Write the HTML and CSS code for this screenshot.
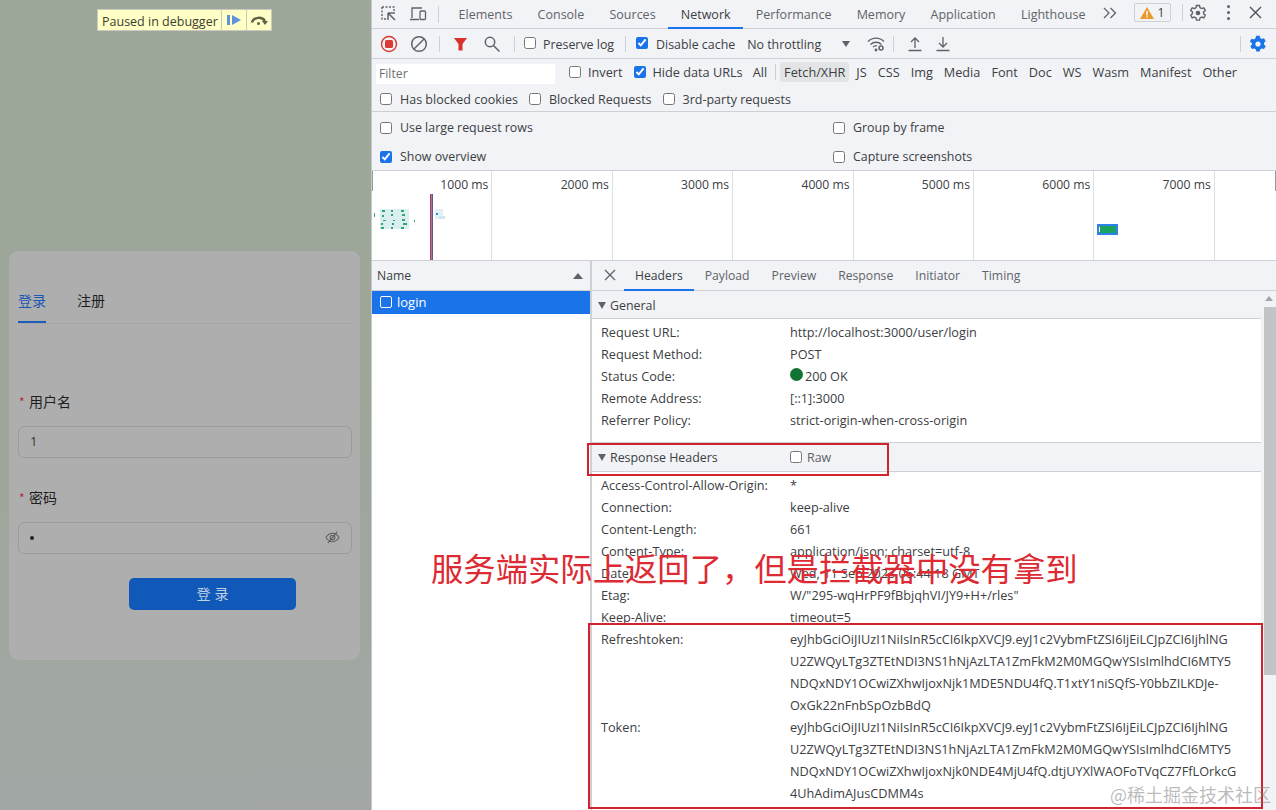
FILE: index.html
```html
<!DOCTYPE html>
<html lang="zh">
<head>
<meta charset="utf-8">
<title>Paused in debugger</title>
<link rel="stylesheet" href="styles.css">
</head>
<body>
<div class="app">
  <section class="page">
    <div class="paused">
      <span class="paused-text">Paused in debugger</span>
      <span class="paused-btn"><svg width="16" height="12" viewBox="0 0 16 12"><rect x="1" y="1" width="3" height="10" fill="#5f94dc"/><path d="M6 1l9 5-9 5z" fill="#5f94dc"/></svg></span>
      <span class="paused-btn"><svg width="19" height="13" viewBox="0 0 19 13"><path d="M2 8.500a7 6 0 0 1 13 -1.500" fill="none" stroke="#5d6148" stroke-width="2.400"/><path d="M12 7h6l-3 4z" fill="#5d6148"/><circle cx="8.500" cy="9.500" r="1.500" fill="#5d6148"/></svg></span>
    </div>
    <div class="card">
      <div class="card-tabs">
        <span class="card-tab active">登录</span>
        <span class="card-tab">注册</span>
      </div>
      <div class="field first">
        <label class="field-label"><span class="req">*</span>用户名</label>
        <div class="input">1</div>
      </div>
      <div class="field">
        <label class="field-label"><span class="req">*</span>密码</label>
        <div class="input pw"><span class="dot"></span>
          <svg width="15" height="15" viewBox="0 0 16 16" fill="none" stroke="#5e5e5e" stroke-width="1.100"><path d="M1 8c2-3 4.300-4.500 7-4.500S13 5 15 8c-2 3-4.300 4.500-7 4.500S3 11 1 8z"/><circle cx="8" cy="8" r="2.500"/><path d="M13 2L3 14"/></svg>
        </div>
      </div>
      <div class="submit">登 录</div>
    </div>
  </section>

  <section class="devtools">
    <div class="bar tabs-bar">
      <span class="ico first-ico"><svg width="18" height="18" viewBox="0 0 18 18" fill="none" stroke="#5f6368" stroke-width="1.400"><path d="M2 2h12v4M2 2v12h4" stroke-dasharray="2 1.500"/><path d="M8 8h7M8 8v7M8 8l7 7" stroke-width="1.500"/></svg></span>
      <span class="ico"><svg width="18" height="18" viewBox="0 0 18 18" fill="none" stroke="#5f6368" stroke-width="1.300"><path d="M3 13V3h10M1 14.500h9"/><rect x="11" y="6" width="5.500" height="8.500" rx="1"/></svg></span>
      <span class="sep tall"></span>
      <nav class="main-tabs">
        <span class="tab">Elements</span>
        <span class="tab">Console</span>
        <span class="tab">Sources</span>
        <span class="tab on">Network</span>
        <span class="tab">Performance</span>
        <span class="tab">Memory</span>
        <span class="tab">Application</span>
        <span class="tab">Lighthouse</span>
      </nav>
      <span class="more"><svg width="14" height="12" viewBox="0 0 14 12" fill="none" stroke="#5f6368" stroke-width="1.300"><path d="M1 1l5 5-5 5M7.500 1l5 5-5 5"/></svg></span>
      <span class="warn"><svg width="14" height="12" viewBox="0 0 14 12"><path d="M7 0l7 12H0z" fill="#ea9a2c"/><rect x="6.300" y="4" width="1.400" height="4.500" fill="#fff"/><rect x="6.300" y="9.300" width="1.400" height="1.400" fill="#fff"/></svg>1</span>
      <span class="sep tall warn-sep"></span>
      <span class="ico gear"><svg width="18" height="18" viewBox="0 0 18 18" fill="none" stroke="#5f6368" stroke-width="1.400"><path d="M7.500 1.500h3l.5 2.200 1.700.9 2.100-.8 1.500 2.600-1.700 1.500v1.800l1.700 1.500-1.500 2.600-2.100-.8-1.700.9-.5 2.200h-3l-.5-2.200-1.700-.9-2.100.8-1.500-2.600 1.700-1.500V7.900L1.700 6.400l1.500-2.600 2.100.8L7 3.700z"/><circle cx="9" cy="9" r="2.300" fill="#5f6368" stroke="none"/></svg></span>
      <span class="kebab"><i></i><i></i><i></i></span>
      <span class="ico close"><svg width="13" height="13" viewBox="0 0 13 13" stroke="#4d5156" stroke-width="1.400"><path d="M1 1l11 11M12 1L1 12"/></svg></span>
    </div>

    <div class="bar tools-bar">
      <span class="ico rec"><svg width="18" height="18" viewBox="0 0 18 18"><circle cx="9" cy="9" r="7.500" fill="none" stroke="#d93a34" stroke-width="1.400"/><rect x="5" y="5" width="8" height="8" rx="1.500" fill="#d93a34"/></svg></span>
      <span class="ico clear"><svg width="18" height="18" viewBox="0 0 18 18" fill="none" stroke="#5f6368" stroke-width="1.500"><circle cx="9" cy="9" r="7.300"/><path d="M4 14L14 4"/></svg></span>
      <span class="sep"></span>
      <span class="ico funnel"><svg width="16" height="16" viewBox="0 0 16 16"><path d="M1 2h13L9.500 8v6.500h-4V8z" fill="#d9322d"/></svg></span>
      <span class="ico search"><svg width="18" height="18" viewBox="0 0 18 18" fill="none" stroke="#5f6368" stroke-width="1.500"><circle cx="7" cy="7" r="4.700"/><path d="M10.500 10.500l6 6"/></svg></span>
      <span class="sep"></span>
      <label class="check preserve"><input type="checkbox">Preserve log</label>
      <span class="sep"></span>
      <label class="check disable"><input type="checkbox" checked>Disable cache</label>
      <span class="throttle">No throttling</span>
      <span class="caret"></span>
      <span class="ico wifi"><svg width="18" height="16" viewBox="0 0 18 16" fill="none" stroke="#5f6368" stroke-width="1.300"><path d="M1 5.500c4.500-4.500 11.500-4.500 16 0M3.500 8.500c3-3 8-3 11 0M6 11c1.500-1.200 3-1.500 4-1.300"/><circle cx="14" cy="12" r="2" stroke-width="1.500"/><circle cx="9" cy="14" r=".8" fill="#5f6368"/></svg></span>
      <span class="sep"></span>
      <span class="ico up"><svg width="16" height="16" viewBox="0 0 16 16" fill="none" stroke="#5f6368" stroke-width="1.300"><path d="M8 12V2M4 6l4-4 4 4M1.500 14.500h13"/></svg></span>
      <span class="ico down"><svg width="16" height="16" viewBox="0 0 16 16" fill="none" stroke="#5f6368" stroke-width="1.300"><path d="M8 1v10M4 7l4 4 4-4M1.500 14.500h13"/></svg></span>
      <span class="spacer"></span>
      <span class="sep"></span>
      <span class="ico blue-gear"><svg width="18" height="18" viewBox="0 0 18 18"><path d="M7.300 .8h3.400l.5 2.300 1.500.9 2.300-.7 1.700 2.900-1.700 1.600v1.800l1.700 1.600-1.700 2.900-2.300-.7-1.500.9-.5 2.300H7.300l-.5-2.300-1.500-.9-2.300.7-1.700-2.900 1.700-1.600V8.200L.8 6.600l1.700-2.900 2.300.7 1.500-.9z" fill="#1a73e8"/><circle cx="9" cy="9" r="2.600" fill="#f1f3f6"/></svg></span>
    </div>

    <div class="filters">
      <div class="filter-row">
        <span class="filter-input">Filter</span>
        <label class="check invert"><input type="checkbox">Invert</label>
        <label class="check hide"><input type="checkbox" checked>Hide data URLs</label>
        <span class="type">All</span>
        <span class="sep types-sep"></span>
        <span class="type sel">Fetch/XHR</span>
        <span class="type">JS</span>
        <span class="type">CSS</span>
        <span class="type">Img</span>
        <span class="type">Media</span>
        <span class="type">Font</span>
        <span class="type">Doc</span>
        <span class="type">WS</span>
        <span class="type">Wasm</span>
        <span class="type">Manifest</span>
        <span class="type">Other</span>
      </div>
      <div class="filter-row second">
        <label class="check"><input type="checkbox">Has blocked cookies</label>
        <label class="check"><input type="checkbox">Blocked Requests</label>
        <label class="check"><input type="checkbox">3rd-party requests</label>
      </div>
    </div>

    <div class="settings">
      <label class="check"><input type="checkbox">Use large request rows</label>
      <label class="check"><input type="checkbox">Group by frame</label>
      <label class="check"><input type="checkbox" checked>Show overview</label>
      <label class="check"><input type="checkbox">Capture screenshots</label>
    </div>

    <div class="overview">
      <div class="ov-cell">1000 ms</div>
      <div class="ov-cell">2000 ms</div>
      <div class="ov-cell">3000 ms</div>
      <div class="ov-cell">4000 ms</div>
      <div class="ov-cell">5000 ms</div>
      <div class="ov-cell">6000 ms</div>
      <div class="ov-cell">7000 ms</div>
      <svg class="ov-graph" width="904" height="90" viewBox="0 0 904 90">
        <rect x="0" y="0" width="1" height="20" fill="#9a9a9a"/>
        <rect x="903" y="0" width="1" height="20" fill="#9a9a9a"/>
        <rect x="8" y="38" width="29" height="20" fill="#dbeef0"/>
        <g fill="#2ca876">
          <rect x="10" y="39" width="3" height="2"/><rect x="19" y="39" width="2" height="2"/><rect x="29" y="39" width="3" height="2"/>
          <rect x="10" y="44" width="2" height="2"/><rect x="19" y="43" width="2" height="2"/><rect x="30" y="43" width="3" height="2"/>
          <rect x="11" y="49" width="3" height="1"/><rect x="21" y="49" width="2" height="1"/><rect x="30" y="48" width="3" height="2"/>
          <rect x="9" y="56" width="3" height="2"/><rect x="19" y="56" width="2" height="2"/><rect x="29" y="56" width="3" height="2"/>
          <rect x="9" y="52" width="2" height="2"/><rect x="20" y="52" width="2" height="2"/><rect x="31" y="52" width="4" height="2"/>
          <rect x="2" y="42" width="1" height="4"/><rect x="42" y="49" width="1" height="2"/>
        </g>
        <rect x="58" y="23" width="1.500" height="66" fill="#a34060"/>
        <rect x="59.500" y="23" width="1.500" height="66" fill="#70508c"/>
        <rect x="63" y="38" width="8" height="10" fill="#e2f1f6"/>
        <rect x="64" y="42" width="2" height="2" fill="#2196d3"/>
        <rect x="67" y="45" width="6" height="3" fill="#cfe8f2"/>
        <rect x="725" y="53" width="21" height="11" fill="#1a73e8" opacity=".9"/>
        <rect x="727" y="55" width="17" height="7" fill="#1aa260"/>
        <rect x="727" y="56" width="1" height="5" fill="#fff"/>
      </svg>
    </div>

    <div class="lower">
      <div class="names">
        <div class="names-head">Name<span class="up-caret"></span></div>
        <div class="names-row"><span class="doc"></span>login</div>
      </div>
      <div class="details">
        <div class="detail-tabs">
          <span class="dt-close"><svg width="12" height="12" viewBox="0 0 12 12" stroke="#5f6368" stroke-width="1.300"><path d="M1 1l10 10M11 1L1 11"/></svg></span>
          <span class="dt on">Headers</span>
          <span class="dt">Payload</span>
          <span class="dt">Preview</span>
          <span class="dt">Response</span>
          <span class="dt">Initiator</span>
          <span class="dt">Timing</span>
        </div>
        <div class="detail-body">
          <div class="scroll">
            <div class="sec-head"><span class="tri"></span>General</div>
            <div class="kv-list general">
              <div class="kv"><span>Request URL:</span><span>http://localhost:3000/user/login</span></div>
              <div class="kv"><span>Request Method:</span><span>POST</span></div>
              <div class="kv"><span>Status Code:</span><span><i class="status"></i>200 OK</span></div>
              <div class="kv"><span>Remote Address:</span><span>[::1]:3000</span></div>
              <div class="kv"><span>Referrer Policy:</span><span>strict-origin-when-cross-origin</span></div>
            </div>
            <div class="sec-head second"><span class="tri"></span><span class="sec-name">Response Headers</span><label class="check raw"><input type="checkbox">Raw</label></div>
            <div class="kv-list">
              <div class="kv"><span>Access-Control-Allow-Origin:</span><span>*</span></div>
              <div class="kv"><span>Connection:</span><span>keep-alive</span></div>
              <div class="kv"><span>Content-Length:</span><span>661</span></div>
              <div class="kv"><span>Content-Type:</span><span>application/json; charset=utf-8</span></div>
              <div class="kv"><span>Date:</span><span>Wed, 11 Sep 2023 06:44:18 GMT</span></div>
              <div class="kv"><span>Etag:</span><span>W/"295-wqHrPF9fBbjqhVI/JY9+H+/rles"</span></div>
              <div class="kv"><span>Keep-Alive:</span><span>timeout=5</span></div>
              <div class="kv"><span>Refreshtoken:</span><span>eyJhbGciOiJIUzI1NiIsInR5cCI6IkpXVCJ9.eyJ1c2VybmFtZSI6IjEiLCJpZCI6IjhlNG<br>U2ZWQyLTg3ZTEtNDI3NS1hNjAzLTA1ZmFkM2M0MGQwYSIsImlhdCI6MTY5<br>NDQxNDY1OCwiZXhwIjoxNjk1MDE5NDU4fQ.T1xtY1niSQfS-Y0bbZILKDJe-<br>OxGk22nFnbSpOzbBdQ</span></div>
              <div class="kv"><span>Token:</span><span>eyJhbGciOiJIUzI1NiIsInR5cCI6IkpXVCJ9.eyJ1c2VybmFtZSI6IjEiLCJpZCI6IjhlNG<br>U2ZWQyLTg3ZTEtNDI3NS1hNjAzLTA1ZmFkM2M0MGQwYSIsImlhdCI6MTY5<br>NDQxNDY1OCwiZXhwIjoxNjk0NDE4MjU4fQ.dtjUYXlWAOFoTVqCZ7FfLOrkcG<br>4UhAdimAJusCDMM4s</span></div>
            </div>
          </div>
          <div class="scrollbar"><span class="sb-up"></span><span class="sb-thumb"></span></div>
        </div>
      </div>
    </div>
  </section>
</div>
<div class="mark box-one"></div>
<div class="mark box-two"></div>
<div class="note">服务端实际上返回了，但是拦截器中没有拿到</div>
<div class="watermark">@稀土掘金技术社区</div>
</body>
</html>
```

FILE: styles.css
```css
* { box-sizing: border-box; }
html, body { margin: 0; padding: 0; height: 810px; overflow: hidden; }
body { font-family: "Open Sans", "Noto Sans CJK SC", sans-serif; font-size: 12.200px; color: #3c4043; background: #fff; position: relative; }
.app { display: flex; width: 1276px; height: 810px; }

/* page under the debugger overlay */
.page { width: 372px; flex: none; padding: 251px 11px 0 9px; background: linear-gradient(#9da898, #9ea79a 50%, #a2a7a5); border-right: 1px solid #c4c7cb; position: relative; }
.paused { position: absolute; left: 97px; top: 9px; height: 22px; display: flex; background: #ffffc6; border: 1px solid #c9cbc0; color: #3c3e30; font-size: 12.500px; }
.paused-text { padding: 0 4px; line-height: 23px; width: 123px; white-space: nowrap; }
.paused-btn { width: 25px; border-left: 1px solid #c9cbc0; display: flex; align-items: center; justify-content: center; }
.card { height: 409px; background: #aeaeae; border-radius: 9px; padding: 0 9px; font-family: "Noto Sans CJK SC", sans-serif; font-size: 14px; color: #1e1e1e; }
.card-tabs { height: 73px; display: flex; gap: 31px; border-bottom: 1px solid #a5a5a5; padding-top: 38px; }
.card-tab { height: 34px; line-height: 22px; border-bottom: 2px solid transparent; }
.card-tab.active { color: #1c56b4; border-bottom-color: #1c5cbb; }
.field-label { display: block; height: 22px; line-height: 20px; }
.req { color: #b52a48; display: inline-block; width: 11px; font-size: 12px; margin-left: 1px; margin-right: -1px; }
.field { margin-top: 29px; }
.field.first { margin-top: 67px; }
.input { height: 32px; margin-top: 13px; width: 334px; border: 1px solid #9b9b9b; border-radius: 6px; background: #aeaeae; padding: 0 11px 2px; line-height: 28px; font-family: "Open Sans", sans-serif; font-size: 13px; color: #333; display: flex; align-items: center; justify-content: space-between; }
.input.pw { padding-bottom: 1px; }
.dot { width: 4px; height: 4px; border-radius: 50%; background: #222; }
.submit { width: 167px; height: 32px; margin: 24px 0 0 111px; background: #1059b9; border-radius: 5px; color: #c2d0e6; text-align: center; line-height: 31px; font-size: 14px; word-spacing: 1px; }

/* devtools */
.devtools { flex: 1; min-width: 0; background: #f1f3f6; display: flex; flex-direction: column; }
.bar { display: flex; align-items: center; border-bottom: 1px solid #cdd0d4; }
.tabs-bar { height: 29px; padding-left: 8px; }
.tools-bar { height: 30px; padding-left: 8px; font-size: 12.400px; }
.ico { display: inline-flex; align-items: center; justify-content: center; flex: none; }
.first-ico { width: 18px; margin-right: 11px; }
.sep { width: 1px; height: 16px; background: #cdd0d4; flex: none; }
.sep.tall { height: 17px; margin-left: 11px; }
.main-tabs { display: flex; align-self: stretch; margin-left: 7px; font-size: 12.500px; }
.tab { padding: 0 12.600px; line-height: 30px; height: 29px; color: #5f6368; margin-bottom: -1px; white-space: nowrap; }
.tab.on { color: #3c4043; border-bottom: 2px solid #1a73e8; }
.more { margin-left: 4.600px; display: inline-flex; margin-top: -2px; }
.warn { margin-left: 17px; width: 37px; height: 19px; border: 1px solid #cdd0d4; border-radius: 2px; display: inline-flex; align-items: center; justify-content: center; gap: 4px; margin-top: -3px; }
.warn-sep { margin-left: 7px; margin-top: -3px; }
.gear { margin-left: 6px; margin-top: -3px; }
.kebab { margin-left: 20px; width: 4px; display: flex; flex-direction: column; gap: 3px; margin-top: -3px; }
.kebab i { width: 3px; height: 3px; border-radius: 50%; background: #5f6368; }
.close { margin-left: 18px; margin-top: -3px; }

.clear { margin-left: 12px; }
.rec + .clear + .sep { margin-left: 11px; }
.funnel { margin-left: 13px; }
.search { margin-left: 14px; }
.search + .sep { margin-left: 13px; }
.check { display: inline-flex; align-items: center; white-space: nowrap; }
.check input { width: 12px; height: 12px; margin: 0 8px 0 0; accent-color: #1a73e8; flex: none; }
.preserve { margin-left: 9px; padding-top: 1px; }
.preserve input { margin: -2px 7px 0 0; }
.disable input { margin-top: -2px; }
.preserve + .sep { margin-left: 11px; }
.disable { margin-left: 10px; padding-top: 1px; }
.throttle { margin-left: 12px; white-space: nowrap; padding-top: 1px; }
.caret { width: 0; height: 0; border-left: 4.500px solid transparent; border-right: 4.500px solid transparent; border-top: 6px solid #5f6368; margin-left: 21px; }
.wifi { margin-left: 17px; }
.wifi + .sep { margin-left: 8px; }
.up { margin-left: 13px; }
.down { margin-left: 12px; }
.spacer { flex: 1; }
.blue-gear { margin: 0 9px 0 8px; }

.filters { height: 53px; border-bottom: 1px solid #cdd0d4; padding: 3px 0 0 4px; font-size: 12.700px; }
.filter-row { display: flex; align-items: center; height: 23px; }
.filter-row.second { margin-top: 1px; padding-left: 4px; height: 26px; gap: 11px; font-size: 12.500px; }
.filter-input { width: 179px; height: 20px; background: #fff; color: #6b6f73; line-height: 20px; padding-left: 3px; flex: none; font-size: 12.200px; }
.invert { margin-left: 14px; margin-top: -4px; }
.invert input, .hide input { margin-right: 7px; }
.hide { margin-left: 11px; margin-top: -4px; margin-right: 3px; }
.type { padding: 0 4px; margin-left: 3px; line-height: 20px; margin-top: -4px; border-radius: 3px; white-space: nowrap; }
.types-sep { margin: -4px 0 0 4px; }
.type.sel { background: #e2e4e6; margin-left: 4px; }

.settings { height: 59px; display: grid; grid-template-columns: 453px 1fr; grid-template-rows: 29px 29px; padding: 1px 0 0 8px; border-bottom: 1px solid #cdd0d4; align-items: center; font-size: 12.400px; }

.overview { height: 90px; flex: none; background: #fff; display: flex; position: relative; border-bottom: 1px solid #cdd0d4; }
.ov-cell { width: 120.400px; flex: none; height: 89px; border-right: 1px solid #dcdee0; text-align: right; padding: 6px 3px 0 0; line-height: 16px; }
.ov-graph { position: absolute; left: 0; top: 0; }

.lower { flex: 1; display: flex; min-height: 0; }
.names { width: 219px; flex: none; background: #fff; border-right: 1px solid #cdd0d4; }
.names-head { height: 30px; background: #f1f3f6; border-bottom: 1px solid #cdd0d4; padding: 0 7px 0 5px; line-height: 30px; display: flex; justify-content: space-between; align-items: center; }
.up-caret { width: 0; height: 0; border-left: 5px solid transparent; border-right: 5px solid transparent; border-bottom: 6px solid #5f6368; }
.names-row { height: 23px; background: #1a73e8; color: #fff; font-size: 13px; line-height: 22px; padding-left: 8px; padding-bottom: 1px; display: flex; align-items: center; gap: 5px; }
.doc { width: 12px; height: 12px; border: 1.500px solid #fff; border-radius: 2px; }
.details { flex: 1; min-width: 0; display: flex; flex-direction: column; background: #fff; border-left: 1px solid #cdd0d4; }
.detail-tabs { height: 30px; flex: none; background: #f1f3f6; border-bottom: 1px solid #cdd0d4; display: flex; align-items: stretch; }
.dt-close { width: 32px; padding-left: 12px; display: flex; align-items: center; flex: none; margin-top: -2px; }
.dt { padding: 0 11px; line-height: 29px; color: #5f6368; margin-bottom: -1px; }
.dt.on { color: #3c4043; border-bottom: 2px solid #1a73e8; }
.detail-body { flex: 1; display: flex; min-height: 0; overflow: hidden; }
.scroll { flex: 1; min-width: 0; }
.sec-head { height: 28px; background: #f1f3f6; border-bottom: 1px solid #cdd0d4; display: flex; align-items: center; padding-left: 6px; color: #3c4043; font-size: 12.400px; padding-top: 1px; }
.sec-head.second { height: 30px; border-top: 1px solid #cdd0d4; margin-top: 11px; padding-top: 0; }
.tri { width: 0; height: 0; border-left: 4px solid transparent; border-right: 4px solid transparent; border-top: 7px solid #5f6368; margin-right: 4px; }
.sec-name { width: 180px; }
.raw input { margin-right: 5px; }
.raw { color: #5f6368; }
.kv-list { padding: 2px 0 0 9px; font-size: 12.700px; }
.kv { display: flex; line-height: 22px; }
.kv span:first-child { width: 189px; flex: none; }
.kv span:last-child { white-space: nowrap; }
.status { display: inline-block; width: 13px; height: 13px; border-radius: 50%; background: #137333; margin-right: 2px; vertical-align: 0; }
.scrollbar { width: 15px; flex: none; background: #f1f3f6; position: relative; display: flex; flex-direction: column; align-items: flex-end; }
.sb-up { width: 0; height: 0; border-left: 4px solid transparent; border-right: 4px solid transparent; border-bottom: 5px solid #a3a5a8; margin: 5px 3px 0 0; }
.sb-thumb { width: 12px; height: 368px; background: #c2c4c6; margin-top: 6px; }

/* annotations drawn over the capture */
.mark { position: absolute; border: 2px solid #d3222f; }
.box-one { left: 587px; top: 443px; width: 302px; height: 33px; }
.box-two { left: 588px; top: 623px; width: 675px; height: 186px; }
.note { position: absolute; left: 431px; top: 544px; font-family: "Noto Sans CJK SC", sans-serif; font-size: 32.350px; line-height: 46px; color: #dd2a33; white-space: nowrap; }
.watermark { position: absolute; left: 1110px; top: 781px; font-family: "Noto Sans CJK SC", sans-serif; font-size: 18px; line-height: 26px; color: rgba(120, 120, 120, .5); white-space: nowrap; }
```
